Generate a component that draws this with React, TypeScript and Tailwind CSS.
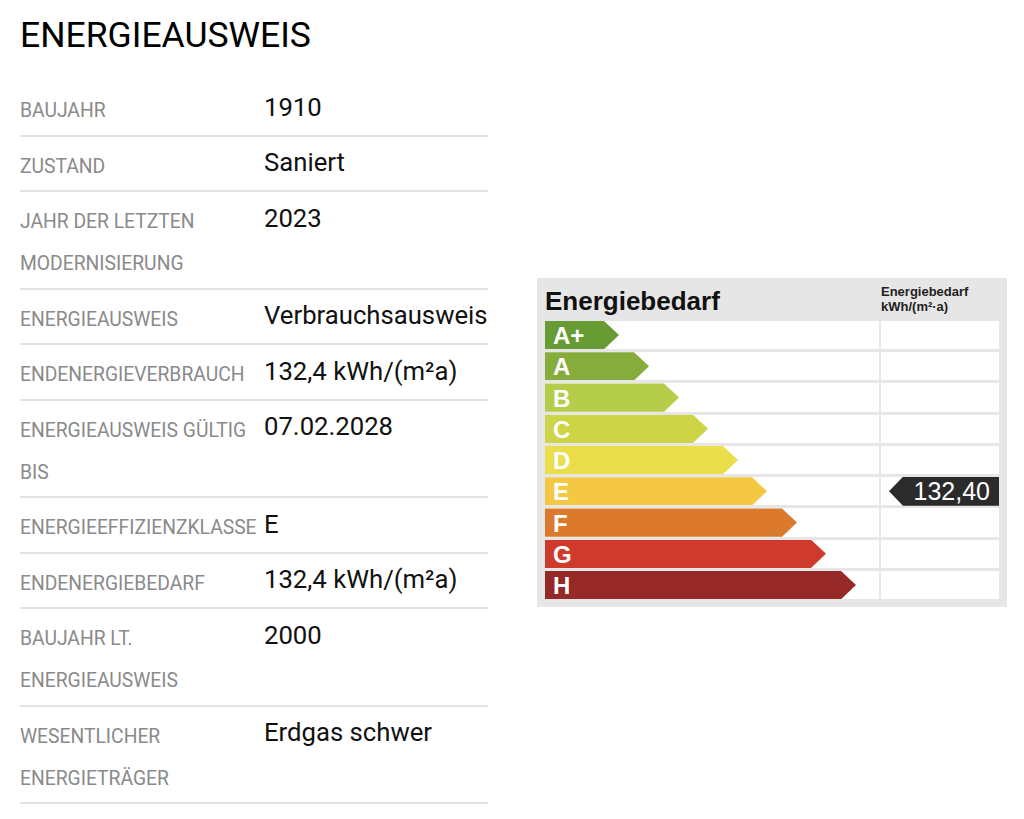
const rows: { label: string[]; value: string }[] = [
  { label: ["BAUJAHR"], value: "1910" },
  { label: ["ZUSTAND"], value: "Saniert" },
  { label: ["JAHR DER LETZTEN", "MODERNISIERUNG"], value: "2023" },
  { label: ["ENERGIEAUSWEIS"], value: "Verbrauchsausweis" },
  { label: ["ENDENERGIEVERBRAUCH"], value: "132,4 kWh/(m²a)" },
  { label: ["ENERGIEAUSWEIS GÜLTIG", "BIS"], value: "07.02.2028" },
  { label: ["ENERGIEEFFIZIENZKLASSE"], value: "E" },
  { label: ["ENDENERGIEBEDARF"], value: "132,4 kWh/(m²a)" },
  { label: ["BAUJAHR LT.", "ENERGIEAUSWEIS"], value: "2000" },
  { label: ["WESENTLICHER", "ENERGIETRÄGER"], value: "Erdgas schwer" },
];

const classes = [
  { name: "A+", cls: "w-[74px] bg-[#679c35]" },
  { name: "A", cls: "w-[104px] bg-[#86ac3c]" },
  { name: "B", cls: "w-[134px] bg-[#b5cd4a]" },
  { name: "C", cls: "w-[163px] bg-[#cdd445]" },
  { name: "D", cls: "w-[193px] bg-[#ebde4b]" },
  { name: "E", cls: "w-[222px] bg-[#f4c842]" },
  { name: "F", cls: "w-[252px] bg-[#db7a2d]" },
  { name: "G", cls: "w-[281px] bg-[#d03a2d]" },
  { name: "H", cls: "w-[311px] bg-[#962828]" },
];

const arrowClip =
  "[clip-path:polygon(0_0,calc(100%-15px)_0,100%_50%,calc(100%-15px)_100%,0_100%)]";

function EnergyChart() {
  return (
    <div className="w-[470px] bg-[#e6e6e6] pl-[8px] pr-[7px] pb-[8px] font-['Liberation_Sans',Arial,sans-serif]">
      <div className="flex h-[43px]">
        <div className="w-[336px] pt-[8px] text-[26px] font-bold leading-[30px] text-[#111]">
          Energiebedarf
        </div>
        <div className="pt-[6px] text-[13px] font-bold leading-[15px] text-[#222]">
          Energiebedarf
          <br />
          kWh/(m²·a)
        </div>
      </div>
      <div className="flex flex-col gap-[3px]">
        {classes.map((c) => (
          <div key={c.name} className="flex h-[28.25px] gap-[2px]">
            <div className="flex w-[334px] items-center bg-white">
              <div
                className={`flex h-full items-center pl-[8px] pt-[2px] text-[24px] font-bold leading-none text-white ${arrowClip} ${c.cls}`}
              >
                {c.name}
              </div>
            </div>
            <div className="flex w-[118px] items-center justify-end bg-white">
              {c.name === "E" && (
                <div className="flex h-[29px] w-[110px] items-center justify-end bg-[#2b2b2b] pr-[9px] pt-[1px] text-[25px] leading-none text-white [clip-path:polygon(0_50%,14px_0,100%_0,100%_100%,14px_100%)]">
                  132,40
                </div>
              )}
            </div>
          </div>
        ))}
      </div>
    </div>
  );
}

export default function App() {
  return (
    <div className="min-h-screen bg-white pl-[20px] pt-[13px] font-['Roboto',sans-serif]">
      <h1 className="text-[35.5px] leading-[44px] text-black">ENERGIEAUSWEIS</h1>
      <div className="mt-[24px] flex items-center">
        <div className="w-[468px]">
          {rows.map((r, i) => (
            <div
              key={i}
              className="grid grid-cols-[244px_1fr] items-start border-b-2 border-[#e3e3e3] pt-[4px] pb-[2.5px]"
            >
              <div className="pt-[5px] text-[19.3px] leading-[42px] text-[#8a8a8a]">
                {r.label.map((l, j) => (
                  <div key={j}>{l}</div>
                ))}
              </div>
              <div className="pt-[0.5px] text-[25.7px] leading-[42px] text-[#111]">{r.value}</div>
            </div>
          ))}
        </div>
        <div className="ml-[49px]">
          <EnergyChart />
        </div>
      </div>
    </div>
  );
}
